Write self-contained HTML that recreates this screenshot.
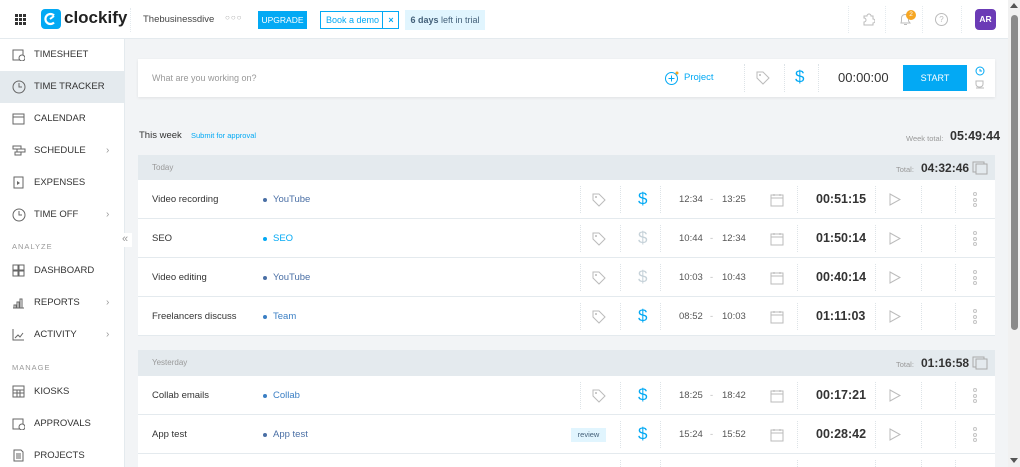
<!DOCTYPE html>
<html style="overflow:hidden;width:1020px;height:467px"><head><meta charset="utf-8"><style>
*{box-sizing:border-box;margin:0;padding:0}
body{width:1020px;height:467px;overflow:hidden;background:#f2f4f6;font-family:"Liberation Sans",sans-serif;color:#333;position:relative}
.top{position:absolute;left:0;top:0;width:1008px;height:39px;background:#fff;border-bottom:1px solid #e4eaee}
.side{position:absolute;left:0;top:39px;width:125px;height:428px;background:#fff;border-right:1px solid #e4eaee}
.ni{position:absolute;left:0;width:125px;height:32px;font-size:9.5px;color:#333;padding-left:34px;line-height:32px}
.ni svg{position:absolute;left:12px;top:9px}
.ni .ar{position:absolute;left:106px;top:0;color:#999;font-size:10px}
.sec{position:absolute;left:12px;font-size:7.5px;letter-spacing:1px;color:#999}
.a{position:absolute}
.card{position:absolute;left:138px;width:857px;background:#fff}
.hd{position:absolute;left:138px;width:857px;height:26px;background:#e4eaee;font-size:8px;color:#999}
.row{position:absolute;left:138px;width:857px;height:39px;background:#fff;border-bottom:1px solid #e4eaee;font-size:9.5px}
.row .d{position:absolute;left:14px;top:14px;color:#333}
.row .p{position:absolute;left:135px;top:14px;color:#03a9f4}
.row .p:before{content:"";position:absolute;left:-10px;top:4px;width:4px;height:4px;border-radius:50%;background:currentColor}
.row .v{position:absolute;top:6px;height:27px;border-left:1px dotted #dde3e7}
.row .t{position:absolute;top:14px;font-size:9.5px;color:#555}
.row .du{position:absolute;left:678px;top:12px;font-size:12.5px;font-weight:bold;color:#333}
.row .dol{position:absolute;left:500px;top:9px;font-size:17px;color:#03a9f4}
.row .dol.g{color:#c6d2d9}
.dots{position:absolute;left:835px;top:12px;width:4px}
.dots i{display:block;width:4px;height:4px;border-radius:50%;border:1px solid #c4c4c4;margin-bottom:1.5px}
.tot{position:absolute;left:783px;top:6px;font-size:12px;font-weight:bold;color:#333}
</style></head><body>
<div class="top">
 <div class="a" style="left:15px;top:14px;width:11px;height:11px;display:grid;grid-template-columns:repeat(3,3px);gap:1px">
  <i style="background:#333"></i><i style="background:#333"></i><i style="background:#333"></i><i style="background:#333"></i><i style="background:#333"></i><i style="background:#333"></i><i style="background:#333"></i><i style="background:#333"></i><i style="background:#333"></i></div>
 <div class="a" style="left:41px;top:9px;width:20px;height:20px;border-radius:4px;background:#03a9f4"><svg width="20" height="20"><path d="M13 6.5a5 5 0 1 0 0 7" stroke="#fff" stroke-width="2.2" fill="none"/><path d="M9 10l4-3" stroke="#fff" stroke-width="2"/></svg></div>
 <div class="a" style="left:64px;top:8px;font-size:17px;font-weight:bold;color:#222">clockify</div>
 <div class="a" style="left:130px;top:8px;height:24px;border-left:1px dotted #e4eaee"></div>
 <div class="a" style="left:143px;top:14px;font-size:9.5px;color:#444">Thebusinessdive</div>
 <div class="a" style="left:225px;top:13px;font-size:8px;color:#aaa;letter-spacing:1px">○○○</div>
 <div class="a" style="left:258px;top:11px;width:49px;height:18px;background:#03a9f4;color:#fff;font-size:8.5px;line-height:18px;text-align:center">UPGRADE</div>
 <div class="a" style="left:320px;top:11px;width:79px;height:18px;border:1px solid #03a9f4;color:#03a9f4;font-size:9px;line-height:16px;padding-left:5px">Book a demo<span style="position:absolute;left:61px;top:0;width:17px;height:16px;border-left:1px solid #03a9f4;text-align:center;font-weight:bold">×</span></div>
 <div class="a" style="left:405px;top:10px;width:80px;height:20px;background:#e1f5fe;color:#44617a;font-size:9px;line-height:20px;text-align:center"><b>6 days</b> left in trial</div>
 <div class="a" style="left:848px;top:6px;height:27px;border-left:1px dotted #e4eaee"></div>
 <div class="a" style="left:885px;top:6px;height:27px;border-left:1px dotted #e4eaee"></div>
 <div class="a" style="left:922px;top:6px;height:27px;border-left:1px dotted #e4eaee"></div>
 <div class="a" style="left:961px;top:6px;height:27px;border-left:1px dotted #e4eaee"></div>
 <svg class="a" style="left:861px;top:12px" width="14" height="14"><path d="M3 4h3a2 2 0 0 1 4 0h2v3a2 2 0 0 1 0 4v2H3v-3a2 2 0 0 0 0-4z" fill="none" stroke="#bbb"/></svg>
 <svg class="a" style="left:898px;top:12px" width="14" height="14"><path d="M3 11h9l-1.5-2V6a3.5 3.5 0 0 0-7 0v3z M6 12.5h3" fill="none" stroke="#bbb"/></svg>
 <div class="a" style="left:906px;top:10px;width:10px;height:10px;border-radius:50%;background:#f6a623;color:#fff;font-size:6.5px;line-height:10px;text-align:center">2</div>
 <div class="a" style="left:935px;top:13px;width:13px;height:13px;border:1px solid #bbb;border-radius:50%;font-size:8px;color:#bbb;text-align:center;line-height:11px">?</div>
 <div class="a" style="left:975px;top:9px;width:21px;height:21px;border-radius:4px;background:#6b3bb6;color:#fff;font-size:8.5px;font-weight:bold;text-align:center;line-height:21px">AR</div>
</div>
<div class="side">
 <div class="ni" style="top:0"><svg width="13" height="13"><rect x="1" y="2" width="10" height="10" fill="none" stroke="#666"/><circle cx="10" cy="10" r="3" fill="#fff" stroke="#666"/></svg>TIMESHEET</div>
 <div class="ni" style="top:32px;background:#e4eaee"><svg width="14" height="14"><circle cx="7" cy="7" r="6" fill="none" stroke="#666"/><path d="M7 3v4h3" fill="none" stroke="#666"/></svg>TIME TRACKER</div>
 <div class="ni" style="top:64px"><svg width="13" height="13"><rect x="1" y="2" width="11" height="10" fill="none" stroke="#666"/><path d="M1 5h11" stroke="#666"/></svg>CALENDAR</div>
 <div class="ni" style="top:96px"><svg width="14" height="13"><path d="M1 2h8v3H1zM5 5h8v3H5zM3 8h6v3H3z" fill="none" stroke="#666"/></svg>SCHEDULE<span class="ar">›</span></div>
 <div class="ni" style="top:128px"><svg width="13" height="13"><rect x="2" y="1" width="9" height="11" fill="none" stroke="#666"/><path d="M5 5v4l3-2z" fill="#666"/></svg>EXPENSES</div>
 <div class="ni" style="top:160px"><svg width="14" height="14"><circle cx="7" cy="7" r="6" fill="none" stroke="#666"/><path d="M7 3v4h3" fill="none" stroke="#666"/></svg>TIME OFF<span class="ar">›</span></div>
 <div class="sec" style="top:203px">ANALYZE</div>
 <div class="ni" style="top:216px"><svg width="13" height="13"><path d="M1 1h5v5H1zM7 1h5v5H7zM1 7h5v5H1zM7 7h5v5H7z" fill="none" stroke="#666"/></svg>DASHBOARD</div>
 <div class="ni" style="top:248px"><svg width="13" height="13"><path d="M1 12h11M2 12V9h2v3M5 12V6h2v6M8 12V3h2v9" fill="none" stroke="#666"/></svg>REPORTS<span class="ar">›</span></div>
 <div class="ni" style="top:280px"><svg width="13" height="13"><path d="M1 1v11h11M3 10l3-3 2 2 3-4" fill="none" stroke="#666"/></svg>ACTIVITY<span class="ar">›</span></div>
 <div class="sec" style="top:324px">MANAGE</div>
 <div class="ni" style="top:337px"><svg width="13" height="13"><rect x="1" y="1" width="11" height="11" fill="none" stroke="#666"/><path d="M1 5h11M1 8h11M5 5v7M8 5v7" stroke="#666"/></svg>KIOSKS</div>
 <div class="ni" style="top:369px"><svg width="13" height="13"><rect x="1" y="2" width="10" height="10" fill="none" stroke="#666"/><circle cx="10" cy="10" r="3" fill="#fff" stroke="#666"/></svg>APPROVALS</div>
 <div class="ni" style="top:401px"><svg width="13" height="13"><path d="M2 1h7l2 2v9H2z M4 5h5M4 7h5M4 9h5" fill="none" stroke="#666"/></svg>PROJECTS</div>
</div>
<div class="a" style="left:118px;top:233px;width:14px;height:14px;background:#fff;color:#999;font-size:11px;text-align:center;line-height:13px">«</div>
<div class="card" style="top:59px;height:38px;width:857px;box-shadow:0 1px 3px rgba(0,0,0,.08)">
 <div class="a" style="left:14px;top:14px;font-size:9px;color:#999">What are you working on?</div>
 <svg class="a" style="left:526px;top:11px" width="16" height="16"><circle cx="7.5" cy="8.5" r="6" fill="none" stroke="#03a9f4"/><path d="M7.5 5.5v6M4.5 8.5h6" stroke="#03a9f4"/><circle cx="13" cy="3" r="1.5" fill="#f6a623"/></svg>
 <div class="a" style="left:546px;top:13px;font-size:9.5px;color:#03a9f4">Project</div>
 <div class="a" style="left:606px;top:5px;height:28px;border-left:1px dotted #dde3e7"></div>
 <svg class="a" style="left:617px;top:11px" width="16" height="16"><path d="M2 2h6l6 6-6 6-6-6z" fill="none" stroke="#bbb"/><circle cx="5" cy="5" r="1" fill="#bbb"/></svg>
 <div class="a" style="left:646px;top:5px;height:28px;border-left:1px dotted #dde3e7"></div>
 <div class="a" style="left:657px;top:8px;font-size:17px;color:#03a9f4">$</div>
 <div class="a" style="left:680px;top:5px;height:28px;border-left:1px dotted #dde3e7"></div>
 <div class="a" style="left:700px;top:11px;font-size:13px;color:#333">00:00:00</div>
 <div class="a" style="left:765px;top:6px;width:64px;height:26px;background:#03a9f4;color:#fff;font-size:9px;line-height:26px;text-align:center">START</div>
 <svg class="a" style="left:836px;top:7px" width="12" height="24"><circle cx="6" cy="5" r="4" fill="none" stroke="#03a9f4"/><path d="M6 3v2h2" fill="none" stroke="#03a9f4"/><path d="M2 15h7v3a3 3 0 0 1-3 3h-1a3 3 0 0 1-3-3z M2 22h8" fill="none" stroke="#bbb"/></svg>
</div>
<div class="a" style="left:139px;top:130px;font-size:9.5px;color:#333">This week</div>
<div class="a" style="left:191px;top:131px;font-size:7.5px;color:#03a9f4">Submit for approval</div>
<div class="a" style="left:906px;top:134px;font-size:7.5px;color:#999">Week total:</div>
<div class="a" style="left:950px;top:129px;font-size:12.5px;font-weight:bold;color:#333">05:49:44</div>

<div class="hd" style="top:155px"><span class="a" style="left:14px;top:8px">Today</span><span class="a" style="left:758px;top:10px;font-size:7.5px">Total:</span><span class="tot">04:32:46</span><svg class="a" style="left:834px;top:6px" width="16" height="14"><rect x="1" y="1" width="11" height="10" fill="none" stroke="#aaa"/><rect x="4" y="3" width="11" height="10" fill="#e4eaee" stroke="#aaa"/></svg></div>
<div class="hd" style="top:350px"><span class="a" style="left:14px;top:8px">Yesterday</span><span class="a" style="left:758px;top:10px;font-size:7.5px">Total:</span><span class="tot">01:16:58</span><svg class="a" style="left:834px;top:6px" width="16" height="14"><rect x="1" y="1" width="11" height="10" fill="none" stroke="#aaa"/><rect x="4" y="3" width="11" height="10" fill="#e4eaee" stroke="#aaa"/></svg></div>

<div class="row" style="top:180px"><span class="d">Video recording</span><span class="p" style="color:#4a6fa5">YouTube</span>
 <i class="v" style="left:442px"></i><svg class="a" style="left:453px;top:12px" width="16" height="16"><path d="M2 2h6l6 6-6 6-6-6z" fill="none" stroke="#bbb"/><circle cx="5" cy="5" r="1" fill="#bbb"/></svg><i class="v" style="left:482px"></i><span class="dol">$</span><i class="v" style="left:522px"></i><span class="t" style="left:541px">12:34</span><span class="t" style="left:572px;color:#bbb">-</span><span class="t" style="left:584px">13:25</span><svg class="a" style="left:632px;top:13px" width="14" height="14"><rect x="1" y="2" width="12" height="11" fill="none" stroke="#bbb"/><path d="M1 5h12M4 1v2M10 1v2" stroke="#bbb"/></svg><i class="v" style="left:659px"></i><span class="du">00:51:15</span><i class="v" style="left:737px"></i><svg class="a" style="left:751px;top:13px" width="12" height="13"><path d="M1 1l10 5.5L1 12z" fill="none" stroke="#bbb"/></svg><i class="v" style="left:783px"></i><i class="v" style="left:817px"></i><span class="dots"><i></i><i></i><i></i></span></div>

<div class="row" style="top:219px"><span class="d">SEO</span><span class="p">SEO</span>
 <i class="v" style="left:442px"></i><svg class="a" style="left:453px;top:12px" width="16" height="16"><path d="M2 2h6l6 6-6 6-6-6z" fill="none" stroke="#bbb"/><circle cx="5" cy="5" r="1" fill="#bbb"/></svg><i class="v" style="left:482px"></i><span class="dol g">$</span><i class="v" style="left:522px"></i><span class="t" style="left:541px">10:44</span><span class="t" style="left:572px;color:#bbb">-</span><span class="t" style="left:584px">12:34</span><svg class="a" style="left:632px;top:13px" width="14" height="14"><rect x="1" y="2" width="12" height="11" fill="none" stroke="#bbb"/><path d="M1 5h12M4 1v2M10 1v2" stroke="#bbb"/></svg><i class="v" style="left:659px"></i><span class="du">01:50:14</span><i class="v" style="left:737px"></i><svg class="a" style="left:751px;top:13px" width="12" height="13"><path d="M1 1l10 5.5L1 12z" fill="none" stroke="#bbb"/></svg><i class="v" style="left:783px"></i><i class="v" style="left:817px"></i><span class="dots"><i></i><i></i><i></i></span></div>

<div class="row" style="top:258px"><span class="d">Video editing</span><span class="p" style="color:#4a6fa5">YouTube</span>
 <i class="v" style="left:442px"></i><svg class="a" style="left:453px;top:12px" width="16" height="16"><path d="M2 2h6l6 6-6 6-6-6z" fill="none" stroke="#bbb"/><circle cx="5" cy="5" r="1" fill="#bbb"/></svg><i class="v" style="left:482px"></i><span class="dol g">$</span><i class="v" style="left:522px"></i><span class="t" style="left:541px">10:03</span><span class="t" style="left:572px;color:#bbb">-</span><span class="t" style="left:584px">10:43</span><svg class="a" style="left:632px;top:13px" width="14" height="14"><rect x="1" y="2" width="12" height="11" fill="none" stroke="#bbb"/><path d="M1 5h12M4 1v2M10 1v2" stroke="#bbb"/></svg><i class="v" style="left:659px"></i><span class="du">00:40:14</span><i class="v" style="left:737px"></i><svg class="a" style="left:751px;top:13px" width="12" height="13"><path d="M1 1l10 5.5L1 12z" fill="none" stroke="#bbb"/></svg><i class="v" style="left:783px"></i><i class="v" style="left:817px"></i><span class="dots"><i></i><i></i><i></i></span></div>

<div class="row" style="top:297px"><span class="d">Freelancers discuss</span><span class="p" style="color:#3b7fc4">Team</span>
 <i class="v" style="left:442px"></i><svg class="a" style="left:453px;top:12px" width="16" height="16"><path d="M2 2h6l6 6-6 6-6-6z" fill="none" stroke="#bbb"/><circle cx="5" cy="5" r="1" fill="#bbb"/></svg><i class="v" style="left:482px"></i><span class="dol">$</span><i class="v" style="left:522px"></i><span class="t" style="left:541px">08:52</span><span class="t" style="left:572px;color:#bbb">-</span><span class="t" style="left:584px">10:03</span><svg class="a" style="left:632px;top:13px" width="14" height="14"><rect x="1" y="2" width="12" height="11" fill="none" stroke="#bbb"/><path d="M1 5h12M4 1v2M10 1v2" stroke="#bbb"/></svg><i class="v" style="left:659px"></i><span class="du">01:11:03</span><i class="v" style="left:737px"></i><svg class="a" style="left:751px;top:13px" width="12" height="13"><path d="M1 1l10 5.5L1 12z" fill="none" stroke="#bbb"/></svg><i class="v" style="left:783px"></i><i class="v" style="left:817px"></i><span class="dots"><i></i><i></i><i></i></span></div>

<div class="row" style="top:376px"><span class="d">Collab emails</span><span class="p" style="color:#3b7fc4">Collab</span>
 <i class="v" style="left:442px"></i><svg class="a" style="left:453px;top:12px" width="16" height="16"><path d="M2 2h6l6 6-6 6-6-6z" fill="none" stroke="#bbb"/><circle cx="5" cy="5" r="1" fill="#bbb"/></svg><i class="v" style="left:482px"></i><span class="dol">$</span><i class="v" style="left:522px"></i><span class="t" style="left:541px">18:25</span><span class="t" style="left:572px;color:#bbb">-</span><span class="t" style="left:584px">18:42</span><svg class="a" style="left:632px;top:13px" width="14" height="14"><rect x="1" y="2" width="12" height="11" fill="none" stroke="#bbb"/><path d="M1 5h12M4 1v2M10 1v2" stroke="#bbb"/></svg><i class="v" style="left:659px"></i><span class="du">00:17:21</span><i class="v" style="left:737px"></i><svg class="a" style="left:751px;top:13px" width="12" height="13"><path d="M1 1l10 5.5L1 12z" fill="none" stroke="#bbb"/></svg><i class="v" style="left:783px"></i><i class="v" style="left:817px"></i><span class="dots"><i></i><i></i><i></i></span></div>

<div class="row" style="top:415px"><span class="d">App test</span><span class="p" style="color:#4a6fa5">App test</span>
 <span class="a" style="left:433px;top:13px;width:35px;height:14px;background:#e1f5fe;color:#44617a;font-size:7.5px;line-height:14px;text-align:center">review</span><i class="v" style="left:482px"></i><span class="dol">$</span><i class="v" style="left:522px"></i><span class="t" style="left:541px">15:24</span><span class="t" style="left:572px;color:#bbb">-</span><span class="t" style="left:584px">15:52</span><svg class="a" style="left:632px;top:13px" width="14" height="14"><rect x="1" y="2" width="12" height="11" fill="none" stroke="#bbb"/><path d="M1 5h12M4 1v2M10 1v2" stroke="#bbb"/></svg><i class="v" style="left:659px"></i><span class="du">00:28:42</span><i class="v" style="left:737px"></i><svg class="a" style="left:751px;top:13px" width="12" height="13"><path d="M1 1l10 5.5L1 12z" fill="none" stroke="#bbb"/></svg><i class="v" style="left:783px"></i><i class="v" style="left:817px"></i><span class="dots"><i></i><i></i><i></i></span></div>

<div class="row" style="top:454px;height:13px;border:none"><i class="v" style="left:482px;top:6px;height:7px"></i><i class="v" style="left:522px;top:6px;height:7px"></i><i class="v" style="left:659px;top:6px;height:7px"></i><i class="v" style="left:737px;top:6px;height:7px"></i><i class="v" style="left:783px;top:6px;height:7px"></i><i class="v" style="left:817px;top:6px;height:7px"></i></div>
<div class="a" style="left:1008px;top:0;width:12px;height:467px;background:#f1f1f1"></div>
<div class="a" style="left:1011px;top:15px;width:7px;height:315px;background:#8a8a8a;border-radius:4px"></div>
<div class="a" style="left:1010px;top:3px;width:0;height:0;border-left:4px solid transparent;border-right:4px solid transparent;border-bottom:5px solid #555"></div>
<div class="a" style="left:1010px;top:458px;width:0;height:0;border-left:4px solid transparent;border-right:4px solid transparent;border-top:5px solid #555"></div>
</body></html>
